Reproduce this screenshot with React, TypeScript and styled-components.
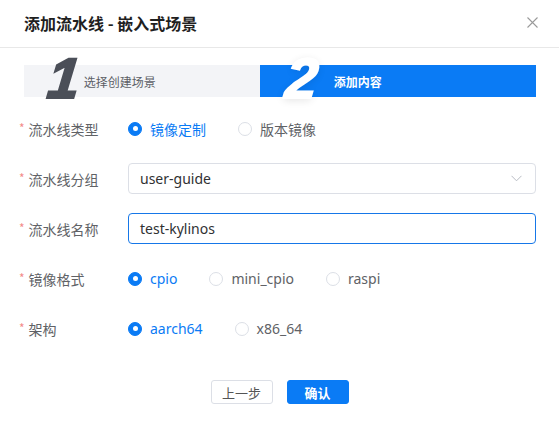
import React from "react";
import styled, { createGlobalStyle } from "styled-components";

const Global = createGlobalStyle`
  html, body { margin: 0; padding: 0; background: #fff; }
  body { font-family: "Noto Sans", "Noto Sans CJK SC", sans-serif; color: #606266; }
  * { box-sizing: border-box; }
`;

const BLUE = "#0a7bf5";

const Dialog = styled.div`
  width: 559px;
  height: 425px;
  background: #fff;
  display: flex;
  flex-direction: column;
`;

const Header = styled.div`
  height: 48px;
  border-bottom: 1px solid #e8e8e8;
  display: flex;
  align-items: center;
  justify-content: space-between;
  padding: 0 21px 2px 24px;
`;

const Title = styled.div`
  font-size: 16px;
  font-weight: 700;
  color: #1f1f1f;
  font-family: "Noto Sans CJK SC", sans-serif;
`;

const Close = styled.button`
  border: 0;
  background: none;
  padding: 0;
  width: 12px;
  height: 12px;
  display: flex;
  align-items: center;
  justify-content: center;
  cursor: pointer;
`;

const Steps = styled.div`
  display: flex;
  height: 32px;
  margin: 17px 23px 0 24px;
`;

const Step = styled.div<{ $active?: boolean; $w: number; $pad: number; $gap: number }>`
  width: ${(p) => p.$w}px;
  flex: ${(p) => (p.$active ? "1" : "none")};
  background: ${(p) => (p.$active ? BLUE : "#f3f4f7")};
  display: flex;
  align-items: center;
  padding-left: ${(p) => p.$pad}px;
  gap: ${(p) => p.$gap}px;
`;

const Digit = styled.span<{ $active?: boolean }>`
  font-family: "Liberation Sans", Arial, sans-serif;
  font-size: 57px;
  font-weight: 700;
  font-style: italic;
  line-height: 32px;
  height: 32px;
  color: ${(p) => (p.$active ? "#fff" : "#4b4f58")};
  -webkit-text-stroke: 2px ${(p) => (p.$active ? "#fff" : "#4b4f58")};
  text-shadow: ${(p) => (p.$active ? "0 2px 8px rgba(0,0,0,0.12)" : "none")};
  transform: translateY(-3px) skewX(-6deg);
`;

const StepText = styled.span<{ $active?: boolean }>`
  font-size: 12px;
  font-family: "Noto Sans CJK SC", sans-serif;
  color: ${(p) => (p.$active ? "#fff" : "#5c5f66")};
  font-weight: ${(p) => (p.$active ? 700 : 400)};
`;

const Form = styled.div`
  display: flex;
  flex-direction: column;
  gap: 19px;
  margin-top: 16px;
  padding-right: 23px;
`;

const Row = styled.div`
  display: flex;
  align-items: center;
  height: 31px;
`;

const Label = styled.div`
  width: 128px;
  padding-left: 19px;
  font-size: 14px;
  color: #606266;
  display: flex;
  align-items: center;
  font-family: "Noto Sans CJK SC", sans-serif;
`;

const Star = styled.span`
  color: #f38b8b;
  font-size: 12px;
  margin-right: 4px;
  margin-top: -2px;
`;

const RadioGroup = styled.div`
  display: flex;
  align-items: center;
`;

const RadioItem = styled.label`
  display: flex;
  align-items: center;
  gap: 8px;
  margin-right: 32px;
  cursor: pointer;
`;

const Circle = styled.span<{ $on?: boolean }>`
  width: 14px;
  height: 14px;
  border-radius: 50%;
  border: 1px solid ${(p) => (p.$on ? BLUE : "#dcdfe6")};
  background: ${(p) => (p.$on ? BLUE : "#fff")};
  display: flex;
  align-items: center;
  justify-content: center;
  &::after {
    content: "";
    width: 5px;
    height: 5px;
    border-radius: 50%;
    background: #fff;
    display: ${(p) => (p.$on ? "block" : "none")};
  }
`;

const RadioText = styled.span<{ $on?: boolean }>`
  font-size: 14px;
  color: ${(p) => (p.$on ? BLUE : "#606266")};
  font-family: "Noto Sans", "Noto Sans CJK SC", sans-serif;
`;

const Field = styled.div<{ $focus?: boolean }>`
  flex: 1;
  height: 31px;
  border: 1px solid ${(p) => (p.$focus ? "#1677e8" : "#dcdfe6")};
  border-radius: 4px;
  display: flex;
  align-items: center;
  justify-content: space-between;
  padding: 0 13px 0 11px;
  font-size: 14px;
  color: #303133;
`;

const Footer = styled.div`
  display: flex;
  justify-content: center;
  gap: 14px;
  margin-top: 36px;
`;

const Btn = styled.button<{ $primary?: boolean }>`
  width: 62px;
  height: 24px;
  border-radius: 3px;
  border: 1px solid ${(p) => (p.$primary ? BLUE : "#dcdfe6")};
  background: ${(p) => (p.$primary ? BLUE : "#fff")};
  color: ${(p) => (p.$primary ? "#fff" : "#555")};
  font-size: 13px;
  font-weight: ${(p) => (p.$primary ? 700 : 400)};
  font-family: "Noto Sans CJK SC", sans-serif;
  padding: 0;
  cursor: pointer;
`;

type Opt = { label: string; on?: boolean };

const Radios = ({ options }: { options: Opt[] }) => (
  <RadioGroup>
    {options.map((o) => (
      <RadioItem key={o.label}>
        <Circle $on={o.on} />
        <RadioText $on={o.on}>{o.label}</RadioText>
      </RadioItem>
    ))}
  </RadioGroup>
);

export default function App() {
  return (
    <Dialog>
      <Global />
      <Header>
        <Title>添加流水线 - 嵌入式场景</Title>
        <Close aria-label="close">
          <svg width="11" height="11" viewBox="0 0 11 11">
            <path d="M0.5 0.5L10.5 10.5M10.5 0.5L0.5 10.5" stroke="#9a9a9a" strokeWidth="1.1" fill="none" />
          </svg>
        </Close>
      </Header>
      <Steps>
        <Step $w={236} $pad={24} $gap={4}>
          <Digit>1</Digit>
          <StepText>选择创建场景</StepText>
        </Step>
        <Step $active $w={276} $pad={26} $gap={16}>
          <Digit $active>2</Digit>
          <StepText $active>添加内容</StepText>
        </Step>
      </Steps>
      <Form>
        <Row>
          <Label><Star>*</Star>流水线类型</Label>
          <Radios options={[{ label: "镜像定制", on: true }, { label: "版本镜像" }]} />
        </Row>
        <Row>
          <Label><Star>*</Star>流水线分组</Label>
          <Field>
            <span>user-guide</span>
            <svg width="11" height="7" viewBox="0 0 11 7">
              <path d="M0.5 0.8L5.5 5.8L10.5 0.8" stroke="#b8bcc4" strokeWidth="1" fill="none" />
            </svg>
          </Field>
        </Row>
        <Row>
          <Label><Star>*</Star>流水线名称</Label>
          <Field $focus>
            <span>test-kylinos</span>
          </Field>
        </Row>
        <Row>
          <Label><Star>*</Star>镜像格式</Label>
          <Radios options={[{ label: "cpio", on: true }, { label: "mini_cpio" }, { label: "raspi" }]} />
        </Row>
        <Row>
          <Label><Star>*</Star>架构</Label>
          <Radios options={[{ label: "aarch64", on: true }, { label: "x86_64" }]} />
        </Row>
      </Form>
      <Footer>
        <Btn>上一步</Btn>
        <Btn $primary>确认</Btn>
      </Footer>
    </Dialog>
  );
}
